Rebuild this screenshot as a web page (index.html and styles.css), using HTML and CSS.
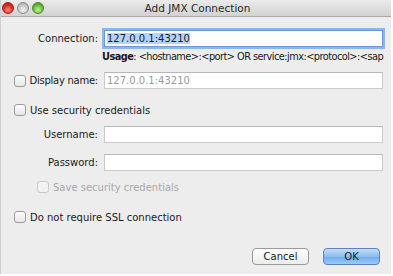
FILE: index.html
```html
<!DOCTYPE html>
<html lang="en">
<head>
    <meta charset="UTF-8">
    <title>Add JMX Connection</title>
    <link rel="stylesheet" href="styles.css">
</head>
<body>
    <div class="window">
        <div class="titlebar">
            <div class="lights">
                <span class="light close"></span>
                <span class="light min"></span>
                <span class="light max"></span>
            </div>
            <div class="title">Add JMX Connection</div>
        </div>

        <div class="content">
            <div class="row row-connection">
                <label class="label">Connection:</label>
                <div class="field focused"><span class="selected">127.0.0.1:43210</span></div>
            </div>
            <div class="row row-usage">
                <span class="label"></span>
                <div class="usage"><b>Usage</b>: &lt;hostname&gt;:&lt;port&gt; OR service:jmx:&lt;protocol&gt;:&lt;sap</div>
            </div>

            <div class="row row-display">
                <label class="label check-label"><span class="checkbox"></span><span class="tight">Display name:</span></label>
                <div class="field placeholder">127.0.0.1:43210</div>
            </div>

            <div class="check row-security">
                <span class="checkbox"></span>Use security credentials
            </div>

            <div class="row row-username">
                <label class="label">Username:</label>
                <div class="field"></div>
            </div>
            <div class="row row-password">
                <label class="label">Password:</label>
                <div class="field"></div>
            </div>

            <div class="check disabled row-save">
                <span class="checkbox"></span>Save security credentials
            </div>

            <div class="check row-ssl">
                <span class="checkbox"></span>Do not require SSL connection
            </div>

            <div class="buttons">
                <button class="btn">Cancel</button>
                <button class="btn default">OK</button>
            </div>
        </div>
    </div>
</body>
</html>
```

FILE: styles.css
```css
body {
    margin: 0;
    background: #fff;
    font-family: "DejaVu Sans", Verdana, sans-serif;
    font-size: 10px;
    color: #1a1a1a;
}
.window {
    width: 391px;
    height: 274px;
    background: #ededed;
    border-left: 1px solid #cfcfcf;
    box-sizing: border-box;
}
.titlebar {
    height: 17px;
    background: linear-gradient(#ebebeb, #d2d2d2);
    border-bottom: 1px solid #a9a9a9;
    display: flex;
    align-items: center;
    box-sizing: border-box;
    font-size: 10.5px;
}
.lights {
    display: flex;
    gap: 3px;
    padding-left: 1px;
}
.light {
    width: 12px;
    height: 12px;
    border-radius: 50%;
    box-sizing: border-box;
}
.close {
    background: radial-gradient(circle at 50% 70%, #ff8a80, #d3261c 60%, #9e1410);
    border: 1px solid #a9231b;
}
.min {
    background: radial-gradient(circle at 50% 70%, #f4f4f4, #c4c4c4 60%, #9a9a9a);
    border: 1px solid #8e8e8e;
}
.max {
    background: radial-gradient(circle at 50% 70%, #c6f19a, #5fb632 60%, #3b8a1c);
    border: 1px solid #458a26;
}
.title {
    flex: 1;
    text-align: center;
    color: #2b2b2b;
    margin-right: 40px;
}
.content {
    padding: 0 8px 0 0;
}
.row {
    display: grid;
    grid-template-columns: 97px 1fr;
    column-gap: 6px;
    align-items: center;
}
.label {
    text-align: right;
    white-space: nowrap;
}
.check-label {
    display: flex;
    align-items: center;
    justify-content: flex-end;
}
.check-label .checkbox {
    margin-right: auto;
    margin-left: 13px;
}
.tight {
    letter-spacing: -0.25px;
}
.field {
    height: 17px;
    background: #fff;
    border: 1px solid #cbcbcb;
    border-top-color: #b8b8b8;
    box-sizing: border-box;
    padding-left: 2px;
    line-height: 15px;
    white-space: nowrap;
}
.focused {
    box-shadow: 0 0 0 2px #8fb6e8;
    border-color: #6d98d6;
}
.selected {
    background: #b4d4f9;
}
.placeholder {
    color: #9a9a9a;
}
.usage {
    white-space: nowrap;
    margin-left: -2px;
    letter-spacing: -0.55px;
    font-size: 9.8px;
}
.check {
    display: flex;
    align-items: center;
    padding-left: 13px;
    height: 14px;
}
.checkbox {
    width: 12px;
    height: 12px;
    border: 1px solid #9c9c9c;
    border-radius: 3px;
    background: linear-gradient(#fdfdfd, #e6e6e6);
    box-sizing: border-box;
    margin-right: 4px;
    flex: none;
}
.disabled {
    color: #a8a8a8;
    padding-left: 36px;
}
.disabled .checkbox {
    border-color: #c8c8c8;
    background: #f2f2f2;
}
.row-connection { margin-top: 13px; }
.row-usage { margin-top: 2px; height: 14px; }
.row-display { margin-top: 9px; }
.row-security { margin-top: 14px; }
.row-username { margin-top: 9px; }
.row-password { margin-top: 11px; }
.row-save { margin-top: 9px; }
.row-ssl { margin-top: 16px; }
.buttons {
    display: flex;
    justify-content: flex-end;
    gap: 14px;
    margin-top: 24px;
    padding-right: 3px;
}
.btn {
    width: 57px;
    height: 17px;
    font-family: inherit;
    font-size: 10px;
    border: 1px solid #9a9a9a;
    border-radius: 4px;
    background: linear-gradient(#ffffff, #ececec);
    padding: 0;
    color: #1a1a1a;
}
.default {
    border-color: #5a84c0;
    background: linear-gradient(#c5dcf7, #8dbcf0 50%, #6fa9ec 51%, #9ccaf5);
}
```
